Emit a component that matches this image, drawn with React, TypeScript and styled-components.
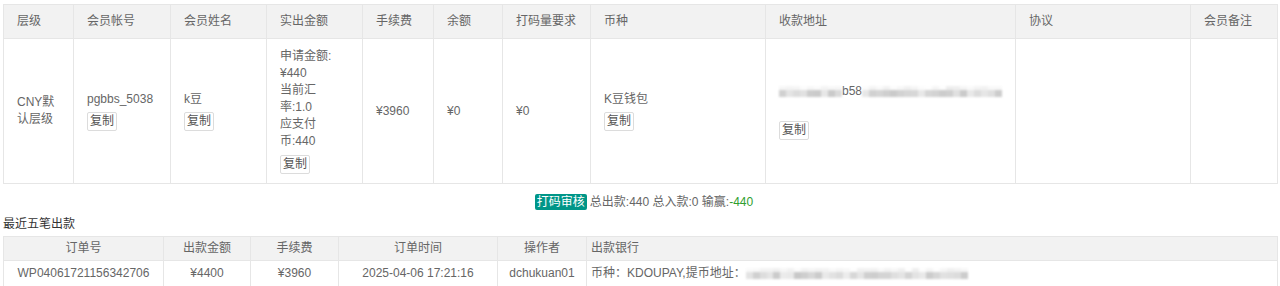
import React from 'react';
import styled, { createGlobalStyle } from 'styled-components';

const GlobalStyle = createGlobalStyle`
  body {
    margin: 0;
    background: #fff;
    font-family: "Liberation Sans", Arial, "Noto Sans CJK SC", sans-serif;
    font-size: 12px;
    color: #666;
  }
`;

const Page = styled.div`
  padding: 4px 3px 0;
`;

const Table = styled.table`
  width: 100%;
  border-collapse: collapse;
  table-layout: fixed;
  line-height: 17px;
`;

const HeadCell = styled.th<{ align?: 'left' | 'center' }>`
  background: #f2f2f2;
  border: 1px solid #e6e6e6;
  font-weight: normal;
  color: #666;
  text-align: ${(p) => p.align || 'left'};
  padding: 8px 13px;
  white-space: nowrap;
`;

const Cell = styled.td`
  border: 1px solid #e6e6e6;
  padding: 9px 13px;
  vertical-align: middle;
  color: #666;
  word-break: break-all;
`;

const SubHeadCell = styled(HeadCell)`
  padding: 3px 4px;
  text-align: ${(p) => p.align || 'center'};
`;

const SubCell = styled.td<{ align?: 'left' | 'center' }>`
  border: 1px solid #e6e6e6;
  padding: 4px 4px;
  text-align: ${(p) => p.align || 'center'};
  color: #666;
  white-space: nowrap;
`;

const CopyButton = styled.button<{ gap?: number }>`
  display: block;
  margin-top: ${(p) => p.gap ?? 4}px;
  height: 19px;
  padding: 0 2px;
  border: 1px solid #dcdcdc;
  border-radius: 2px;
  background: #fff;
  color: #555;
  font-family: inherit;
  font-size: 12px;
  line-height: 17px;
  cursor: pointer;
`;

const AddressLine = styled.div`
  display: flex;
  align-items: center;
  white-space: nowrap;
`;

const MosaicRow = styled.span`
  display: inline-flex;
  flex-direction: column;
  filter: blur(0.8px);
  vertical-align: middle;
`;

const MosaicStrip = styled.span<{ h: number }>`
  display: flex;
  height: ${(p) => p.h}px;
`;

const MosaicBlock = styled.span`
  display: block;
  width: 7px;
  height: 100%;
`;

const Summary = styled.div`
  display: flex;
  justify-content: center;
  align-items: center;
  gap: 3px;
  margin-top: 10px;
  padding-left: 8px;
  height: 16px;
  line-height: 16px;
  color: #666;
`;

const Badge = styled.span`
  background: #009688;
  color: #fff;
  padding: 0 2px;
  border-radius: 2px;
  height: 16px;
  line-height: 16px;
`;

const Win = styled.span`
  color: #2e9e2e;
`;

const SectionTitle = styled.div`
  margin-top: 6px;
  margin-bottom: 3px;
  line-height: 17px;
  color: #333;
`;

const topCols = [70, 97, 96, 96, 71, 69, 88, 175, 250, 175, 87];
const topHeads = ['层级', '会员帐号', '会员姓名', '实出金额', '手续费', '余额', '打码量要求', '币种', '收款地址', '协议', '会员备注'];

const subCols = [160, 87, 88, 159, 89, 691];
const subHeads = ['订单号', '出款金额', '手续费', '订单时间', '操作者', '出款银行'];

// blurred-out address: a pixelated band of grey blocks
const shade = (seed: number, i: number, light: boolean) => {
  const v = Math.abs(Math.sin(seed * 13.7 + i * 7.31)) * 10000;
  const r = v - Math.floor(v);
  const base = light ? 238 : 200;
  const span = light ? 16 : 36;
  const g = Math.round(base + r * span);
  return `rgb(${g},${g},${g})`;
};

const Mosaic: React.FC<{ width: number; seed: number }> = ({ width, seed }) => {
  const n = Math.round(width / 7);
  const idx = Array.from({ length: n }, (_, i) => i);
  return (
    <MosaicRow style={{ width }}>
      <MosaicStrip h={4}>
        {idx.map((i) => (
          <MosaicBlock key={i} style={{ background: shade(seed, i, true) }} />
        ))}
      </MosaicStrip>
      <MosaicStrip h={7}>
        {idx.map((i) => (
          <MosaicBlock key={i} style={{ background: shade(seed + 3, i, false) }} />
        ))}
      </MosaicStrip>
    </MosaicRow>
  );
};

const App: React.FC = () => {
  return (
    <Page>
      <GlobalStyle />
      <Table>
        <colgroup>
          {topCols.map((w, i) => (
            <col key={i} style={{ width: w }} />
          ))}
        </colgroup>
        <thead>
          <tr>
            {topHeads.map((h) => (
              <HeadCell key={h}>{h}</HeadCell>
            ))}
          </tr>
        </thead>
        <tbody>
          <tr>
            <Cell>CNY默认层级</Cell>
            <Cell>
              pgbbs_5038
              <CopyButton>复制</CopyButton>
            </Cell>
            <Cell>
              k豆
              <CopyButton>复制</CopyButton>
            </Cell>
            <Cell>
              申请金额:
              <br />
              ¥440
              <br />
              当前汇
              <br />
              率:1.0
              <br />
              应支付
              <br />
              币:440
              <CopyButton gap={5}>复制</CopyButton>
            </Cell>
            <Cell>¥3960</Cell>
            <Cell>¥0</Cell>
            <Cell>¥0</Cell>
            <Cell>
              K豆钱包
              <CopyButton>复制</CopyButton>
            </Cell>
            <Cell>
              <AddressLine>
                <Mosaic width={63} seed={1} />
                <span>b58</span>
                <Mosaic width={142} seed={5} />
              </AddressLine>
              <CopyButton gap={21}>复制</CopyButton>
            </Cell>
            <Cell />
            <Cell />
          </tr>
        </tbody>
      </Table>

      <Summary>
        <Badge>打码审核</Badge>
        <span>
          总出款:440 总入款:0 输赢:<Win>-440</Win>
        </span>
      </Summary>

      <SectionTitle>最近五笔出款</SectionTitle>

      <Table>
        <colgroup>
          {subCols.map((w, i) => (
            <col key={i} style={{ width: w }} />
          ))}
        </colgroup>
        <thead>
          <tr>
            {subHeads.map((h, i) => (
              <SubHeadCell key={h} align={i === 5 ? 'left' : 'center'}>
                {h}
              </SubHeadCell>
            ))}
          </tr>
        </thead>
        <tbody>
          <tr>
            <SubCell>WP04061721156342706</SubCell>
            <SubCell>¥4400</SubCell>
            <SubCell>¥3960</SubCell>
            <SubCell>2025-04-06 17:21:16</SubCell>
            <SubCell>dchukuan01</SubCell>
            <SubCell align="left">
              币种：KDOUPAY,提币地址：
              <Mosaic width={222} seed={9} />
            </SubCell>
          </tr>
        </tbody>
      </Table>
    </Page>
  );
};

export default App;
